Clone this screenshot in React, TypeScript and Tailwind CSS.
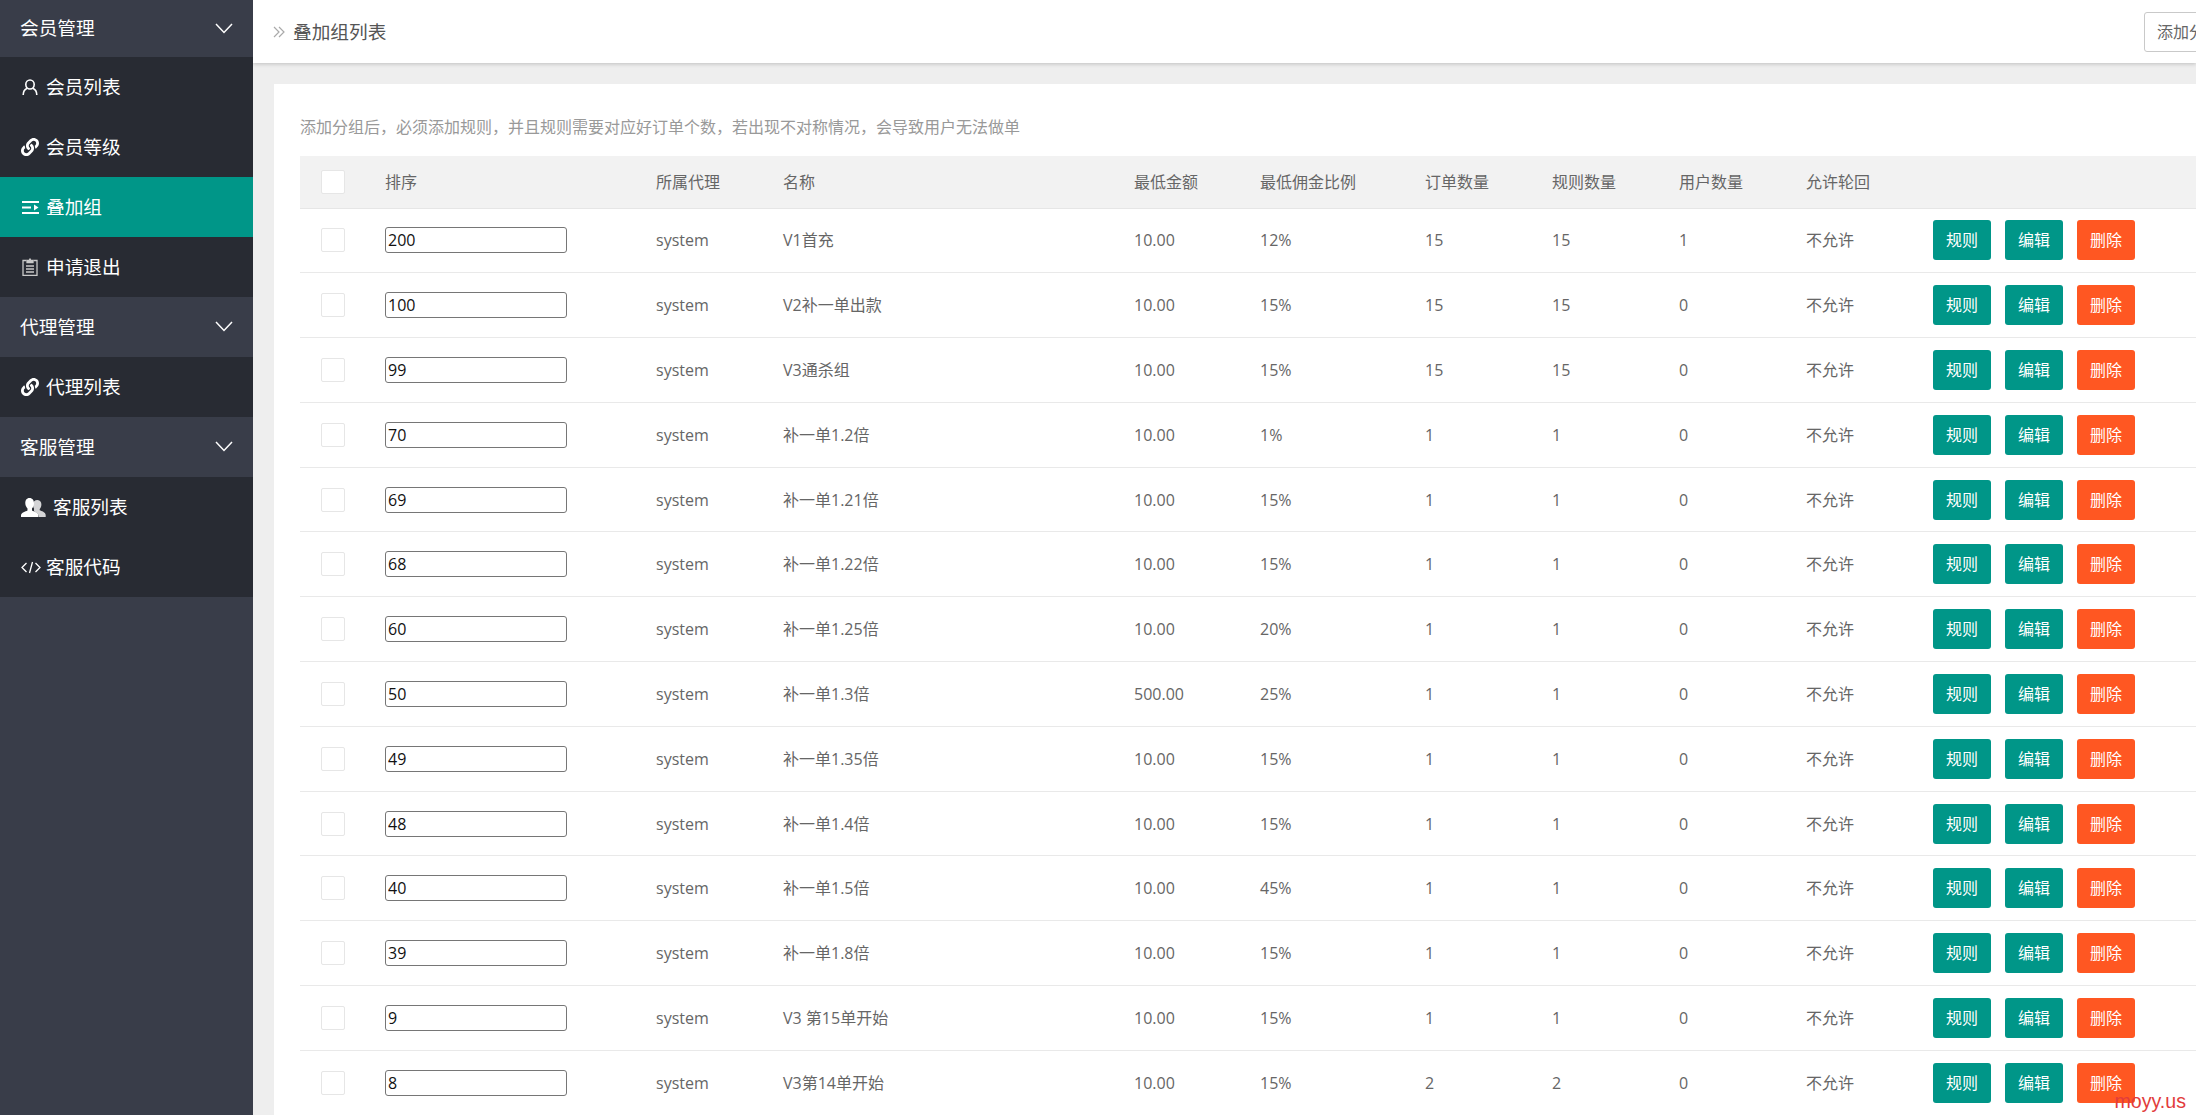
import React from "react";
import { FaLink } from "react-icons/fa";

const FONT = '"Open Sans", "Noto Sans CJK SC", sans-serif';

type Row = [string, string, string, string, string, string, string];
const rows: Row[] = [
  ["200", "V1首充", "10.00", "12%", "15", "15", "1"],
  ["100", "V2补一单出款", "10.00", "15%", "15", "15", "0"],
  ["99", "V3通杀组", "10.00", "15%", "15", "15", "0"],
  ["70", "补一单1.2倍", "10.00", "1%", "1", "1", "0"],
  ["69", "补一单1.21倍", "10.00", "15%", "1", "1", "0"],
  ["68", "补一单1.22倍", "10.00", "15%", "1", "1", "0"],
  ["60", "补一单1.25倍", "10.00", "20%", "1", "1", "0"],
  ["50", "补一单1.3倍", "500.00", "25%", "1", "1", "0"],
  ["49", "补一单1.35倍", "10.00", "15%", "1", "1", "0"],
  ["48", "补一单1.4倍", "10.00", "15%", "1", "1", "0"],
  ["40", "补一单1.5倍", "10.00", "45%", "1", "1", "0"],
  ["39", "补一单1.8倍", "10.00", "15%", "1", "1", "0"],
  ["9", "V3 第15单开始", "10.00", "15%", "1", "1", "0"],
  ["8", "V3第14单开始", "10.00", "15%", "2", "2", "0"],
];

const HINT = "添加分组后\uFF0C必须添加规则\uFF0C并且规则需要对应好订单个数\uFF0C若出现不对称情况\uFF0C会导致用户无法做单";

const Chevron = () => (
  <svg width="18" height="11" viewBox="0 0 18 11" fill="none" stroke="#fff" strokeWidth="1.5" className="ml-auto mr-[20px]">
    <path d="M1 1l8 8.5L17 1" />
  </svg>
);

const Section = ({ label, top }: { label: string; top?: boolean }) => (
  <div className={`flex items-center pl-[20px] bg-[#393d49] text-white text-[18.67px] ${top ? "h-[57px] pb-[1px]" : "h-[60px] pb-[1px]"}`}>
    <span>{label}</span>
    <Chevron />
  </div>
);

const Item = ({ icon, label, active, gap }: { icon: React.ReactNode; label: string; active?: boolean; gap?: string }) => (
  <div className={`flex items-center h-[60px] pl-[21px] text-white text-[18.67px] ${active ? "bg-[#009688]" : "bg-[#282b33]"}`}>
    <span className={`flex items-center justify-start ${gap ?? "w-[25px]"}`}>{icon}</span>
    <span>{label}</span>
  </div>
);

const UserIcon = () => (
  <svg width="17" height="17" viewBox="0 0 17 17" fill="none" stroke="#fff" strokeWidth="1.6" className="ml-[1px]">
    <ellipse cx="8" cy="5.500" rx="4.200" ry="4.500" />
    <path d="M1.200 16c0-3.500 2-5.800 4-6.700M14.800 16c0-3.500-2-5.800-4-6.700" />
  </svg>
);
const IndentIcon = () => (
  <svg width="17" height="13" viewBox="0 0 17 13" fill="#fff" className="ml-[1px]">
    <rect x="0" y="0" width="17" height="2" />
    <rect x="0" y="11" width="17" height="2" />
    <rect x="0" y="5.500" width="9" height="2" />
    <path d="M12 3.500l4.500 3-4.500 3z" />
  </svg>
);
const ClipIcon = () => (
  <svg width="16" height="18" viewBox="0 0 16 18" fill="none" stroke="#c9c9c9" strokeWidth="1.300" className="ml-[1px]">
    <path d="M4.500 2.500H1v15h14v-15h-3.500" />
    <path d="M5 4.500V2.500h2L8 1l1 1.500h2v2z" fill="#c9c9c9" />
    <path d="M4 8h8M4 11h8M4 14h8" />
  </svg>
);
const UsersIcon = () => (
  <svg width="25" height="19" viewBox="0 0 25 19" fill="#fff">
    <path d="M16.500 2c2.800 0 3.900 2.200 3.900 4.500 0 2-.9 3.700-1.700 4.500v1.300c1.700.8 5.800 1.800 6 4.700v2H18c0-2.700-1.800-4.200-5-5.800V10.500c-.7-1-1-2.500-1-3.800C12 4 13.700 2 16.500 2z" opacity=".8" />
    <path d="M8.500 0C11.500 0 13 2.300 13 5.300c0 2.300-1 4.200-2 5.200v2c2 1 6.200 2 6.500 4.800V19H0v-1.700c.3-2.800 4.500-3.800 6.500-4.800v-2c-1-1-2.200-2.900-2.200-5.200C4.300 2.300 5.500 0 8.500 0z" />
  </svg>
);
const CodeIcon = () => (
  <svg width="20" height="13" viewBox="0 0 20 13" fill="none" stroke="#fff" strokeWidth="1.300">
    <path d="M5.500 2L1 6.500 5.500 11M14.500 2L19 6.500 14.500 11M11.500 1L8.500 12" />
  </svg>
);
const LinkIcon = () => <FaLink size={18} color="#fff" />;

const Box = () => <span className="block w-[24px] h-[24px] bg-white border border-[#e6e6e6] rounded-[2px]" />;

const Btn = ({ label, orange }: { label: string; orange?: boolean }) => (
  <span className={`inline-flex items-center justify-center w-[58px] h-[40px] rounded-[3px] text-white text-[16px] ${orange ? "bg-[#ff5722]" : "bg-[#009688]"}`}>
    {label}
  </span>
);

const heads = ["排序", "所属代理", "名称", "最低金额", "最低佣金比例", "订单数量", "规则数量", "用户数量", "允许轮回", ""];
const widths = ["w-[65px]", "w-[271px]", "w-[127px]", "w-[351px]", "w-[126px]", "w-[165px]", "w-[127px]", "w-[127px]", "w-[127px]", "w-[127px]", "w-[300px]"];

export default function App() {
  return (
    <div className="flex h-screen w-screen overflow-hidden bg-[#393d49]" style={{ fontFamily: FONT }}>
      <aside className="w-[253px] shrink-0 bg-[#393d49]">
        <Section label="会员管理" top />
        <Item icon={<UserIcon />} label="会员列表" />
        <Item icon={<LinkIcon />} label="会员等级" />
        <Item icon={<IndentIcon />} label="叠加组" active />
        <Item icon={<ClipIcon />} label="申请退出" />
        <Section label="代理管理" />
        <Item icon={<LinkIcon />} label="代理列表" />
        <Section label="客服管理" />
        <Item icon={<UsersIcon />} label="客服列表" gap="w-[32px]" />
        <Item icon={<CodeIcon />} label="客服代码" />
      </aside>

      <main className="relative flex-1 min-w-0 flex flex-col overflow-hidden bg-[#eeeeee]">
        <header className="relative z-10 flex items-center h-[63px] shrink-0 bg-white pl-[20px] shadow-[0_1px_4px_rgba(0,0,0,0.2)]">
          <svg width="12" height="12" viewBox="0 0 12 12" fill="none" stroke="#aaa" strokeWidth="1.200" className="mr-[8px]">
            <path d="M1 1l5 5-5 5M6 1l5 5-5 5" />
          </svg>
          <span className="text-[18.67px] text-[#555]">叠加组列表</span>
          <span className="ml-auto -mr-[68px] w-[120px] h-[40px] flex items-center pl-[12px] bg-white border border-[#c9c9c9] rounded-[3px] text-[16px] text-[#666] whitespace-nowrap">
            添加分组
          </span>
        </header>

        <div className="flex-1 min-h-0 pl-[21px] pt-[21px]">
          <section className="w-[2000px] h-full bg-white pl-[26px]">
            <p className="pt-[30px] h-[72px] text-[16px] leading-[26px] text-[#999]">{HINT}</p>
            <table className="table-fixed w-[1913px] border-collapse text-[16px] text-[#666]">
              <colgroup>
                {widths.map((w, i) => (
                  <col key={i} className={w} />
                ))}
              </colgroup>
              <thead>
                <tr className="h-[52px] bg-[#f2f2f2] border-b border-[#e6e6e6]">
                  <th className="pl-[21px] font-normal text-left">
                    <Box />
                  </th>
                  {heads.map((h, i) => (
                    <th key={i} className="pl-[20px] font-normal text-left">
                      {h}
                    </th>
                  ))}
                  <th />
                </tr>
              </thead>
              <tbody>
                {rows.map((r) => (
                  <tr key={r[0]} className="h-[64.8px] border-b border-[#e9e9e9]">
                    <td className="pl-[21px]">
                      <Box />
                    </td>
                    <td className="pl-[20px]">
                      <input
                        readOnly
                        value={r[0]}
                        className="block w-[182px] h-[26px] px-[2px] border border-[#767676] rounded-[3px] text-[16px] text-[#111] bg-white"
                      />
                    </td>
                    <td className="pl-[20px]">system</td>
                    <td className="pl-[20px]">{r[1]}</td>
                    <td className="pl-[20px]">{r[2]}</td>
                    <td className="pl-[20px]">{r[3]}</td>
                    <td className="pl-[20px]">{r[4]}</td>
                    <td className="pl-[20px]">{r[5]}</td>
                    <td className="pl-[20px]">{r[6]}</td>
                    <td className="pl-[20px]">不允许</td>
                    <td className="pl-[20px]" colSpan={2}>
                      <div className="flex gap-[14px]">
                        <Btn label="规则" />
                        <Btn label="编辑" />
                        <Btn label="删除" orange />
                      </div>
                    </td>
                  </tr>
                ))}
              </tbody>
            </table>
          </section>
        </div>

        <span className="absolute right-[10px] bottom-[1px] text-[19.6px] leading-[26px] text-[#e23c3c]" style={{ fontFamily: '"Liberation Sans", sans-serif' }}>
          moyy.us
        </span>
      </main>
    </div>
  );
}
